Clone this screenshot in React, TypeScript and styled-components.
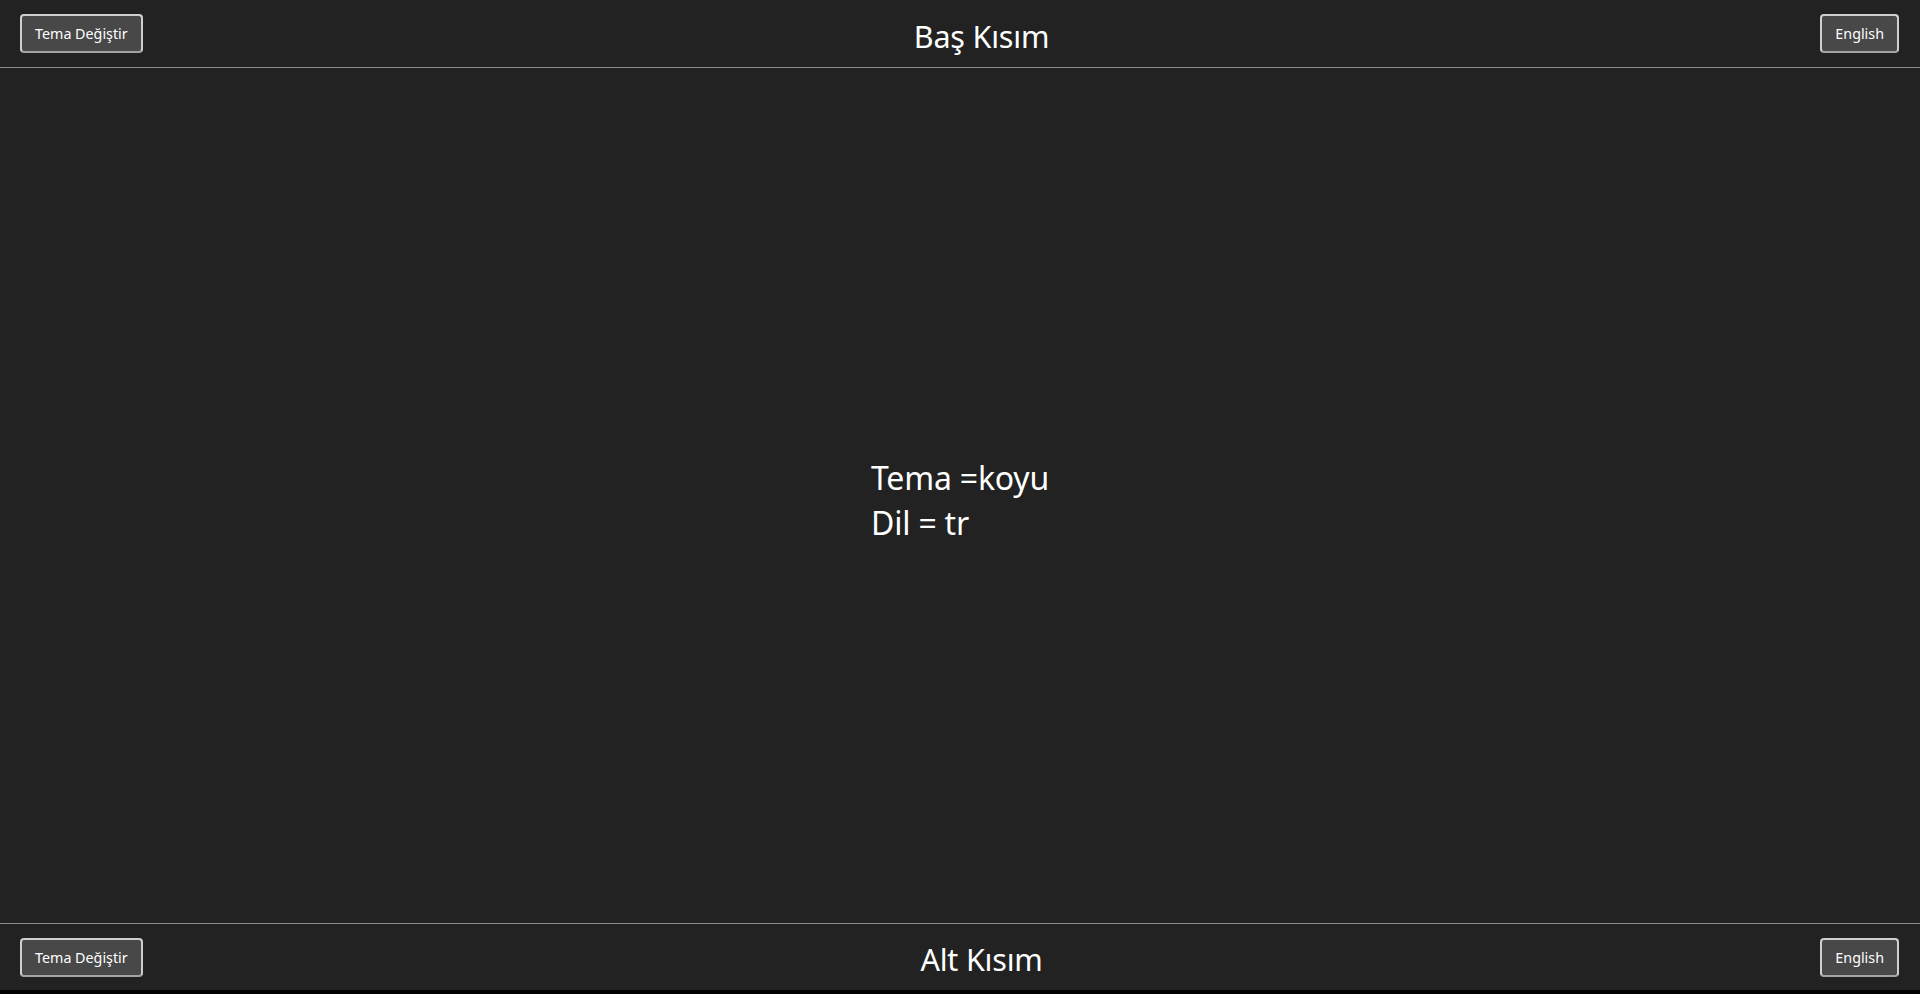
import styled, { createGlobalStyle } from 'styled-components';

const GlobalStyle = createGlobalStyle`
  html, body {
    margin: 0;
    padding: 0;
    background: #000;
  }
  body {
    font-family: "Noto Sans", "Open Sans", sans-serif;
    color: #fff;
  }
`;

const Page = styled.div`
  display: flex;
  flex-direction: column;
  height: 990px;
  background: #222222;
`;

const Bar = styled.div<{ $bottom?: boolean }>`
  display: flex;
  align-items: center;
  justify-content: space-between;
  height: ${({ $bottom }) => ($bottom ? '67px' : '68px')};
  padding: 0 21px 0 20px;
  box-sizing: border-box;
  ${({ $bottom }) =>
    $bottom ? 'border-top: 1px solid #8a8a8a;' : 'border-bottom: 1px solid #8a8a8a;'}
`;

const Button = styled.button`
  height: 39px;
  padding: 0 13px;
  background: #484848;
  color: #fff;
  border: 2px solid #cfcfcf;
  border-bottom-color: #a4a4a4;
  border-radius: 4px;
  font-family: "Noto Sans", "Open Sans", sans-serif;
  font-size: 14.3px;
  cursor: pointer;
`;

const Title = styled.h1`
  margin: 0;
  padding-top: 4px;
  font-size: 30.5px;
  font-weight: 400;
  letter-spacing: -0.2px;
`;

const Main = styled.main`
  flex: 1;
  display: flex;
  align-items: center;
  justify-content: center;
`;

const Info = styled.div`
  padding-top: 8px;
  font-size: 32px;
  line-height: 45px;
  letter-spacing: -0.2px;
`;

const Header = ({ title }: { title: string }) => (
  <Bar>
    <Button>Tema Değiştir</Button>
    <Title>{title}</Title>
    <Button>English</Button>
  </Bar>
);

const Footer = ({ title }: { title: string }) => (
  <Bar $bottom>
    <Button>Tema Değiştir</Button>
    <Title>{title}</Title>
    <Button>English</Button>
  </Bar>
);

export default function App() {
  const theme = 'koyu';
  const lang = 'tr';
  return (
    <>
      <GlobalStyle />
      <Page>
        <Header title="Baş Kısım" />
        <Main>
          <Info>
            <div>Tema ={theme}</div>
            <div>Dil = {lang}</div>
          </Info>
        </Main>
        <Footer title="Alt Kısım" />
      </Page>
    </>
  );
}
